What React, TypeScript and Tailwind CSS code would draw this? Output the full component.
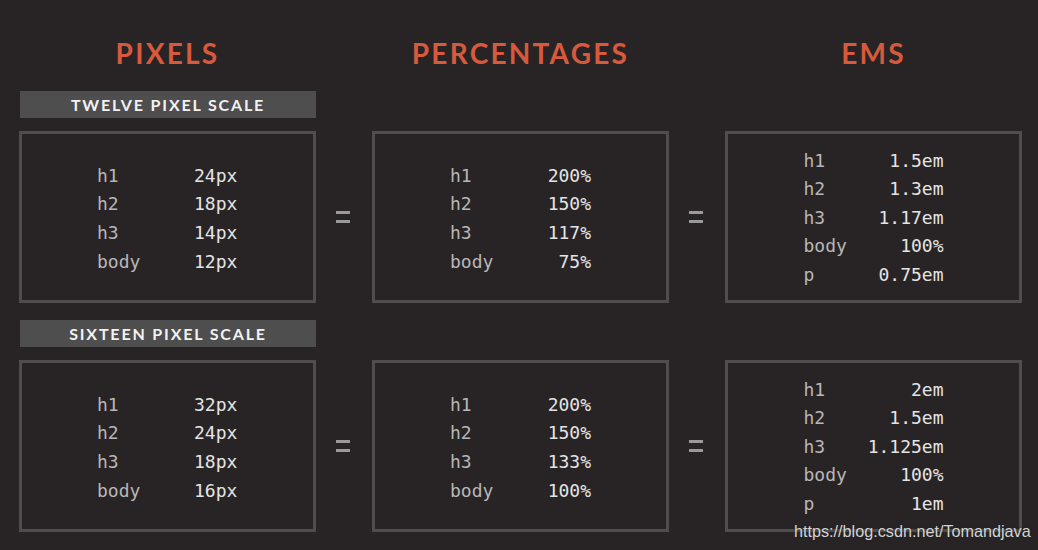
import React from "react";

type Row = [string, string];

const pxTwelve: Row[] = [["h1", "24px"], ["h2", "18px"], ["h3", "14px"], ["body", "12px"]];
const pctTwelve: Row[] = [["h1", "200%"], ["h2", "150%"], ["h3", "117%"], ["body", "75%"]];
const emTwelve: Row[] = [["h1", "1.5em"], ["h2", "1.3em"], ["h3", "1.17em"], ["body", "100%"], ["p", "0.75em"]];

const pxSixteen: Row[] = [["h1", "32px"], ["h2", "24px"], ["h3", "18px"], ["body", "16px"]];
const pctSixteen: Row[] = [["h1", "200%"], ["h2", "150%"], ["h3", "133%"], ["body", "100%"]];
const emSixteen: Row[] = [["h1", "2em"], ["h2", "1.5em"], ["h3", "1.125em"], ["body", "100%"], ["p", "1em"]];

const mono = "font-['DejaVu_Sans_Mono','Liberation_Mono',monospace] text-[18px] leading-[28.6px]";

const Box = ({ rows, kind }: { rows: Row[]; kind: "px" | "pct" | "em" }) => (
  <div className="w-[297px] h-[172px] border-[3px] border-[#4f4d4e] flex items-center justify-center">
    <div className={kind === "em" ? mono + " pt-[2px]" : mono + " pt-[4px]"}>
      {rows.map(([k, v]) => (
        <div key={k} className={kind === "em" ? "flex justify-between w-[140px]" : "flex w-[141px]"}>
          <span className={kind === "em" ? "text-[#b8b7b7]" : "w-[97px] text-[#b8b7b7]"}>{k}</span>
          <span className={kind === "pct" ? "w-[44px] text-right text-[#e4e4e4]" : "text-[#e4e4e4]"}>{v}</span>
        </div>
      ))}
    </div>
  </div>
);

const Equals = () => (
  <div className="w-[56px] flex flex-col items-center justify-center gap-[6px] pr-[2px]">
    <div className="w-[14px] h-[3px] bg-[#9b9a9a]" />
    <div className="w-[14px] h-[3px] bg-[#9b9a9a]" />
  </div>
);

const Label = ({ text }: { text: string }) => (
  <div className="w-[296px] ml-[1px] h-[27px] bg-[#4e4e4e] flex items-center justify-center text-[#f2f2f2] font-['Lato',sans-serif] font-bold text-[16px] tracking-[0.115em]">
    {text}
  </div>
);

const Heading = ({ text }: { text: string }) => (
  <div className="w-[297px] text-center text-[#d65a3b] font-['Lato',sans-serif] font-bold text-[28px] leading-[28px] tracking-[0.08em]">
    {text}
  </div>
);

export default function App() {
  return (
    <div className="relative w-[1038px] h-[550px] bg-[#282426] pl-[19px] overflow-hidden">
      <div className="flex pt-[39px] gap-[56px]">
        <Heading text="PIXELS" />
        <Heading text="PERCENTAGES" />
        <Heading text="EMS" />
      </div>

      <div className="mt-[24px]">
        <Label text="TWELVE PIXEL SCALE" />
      </div>
      <div className="flex mt-[13px]">
        <Box rows={pxTwelve} kind="px" />
        <Equals />
        <Box rows={pctTwelve} kind="pct" />
        <Equals />
        <Box rows={emTwelve} kind="em" />
      </div>

      <div className="mt-[17px]">
        <Label text="SIXTEEN PIXEL SCALE" />
      </div>
      <div className="flex mt-[13px]">
        <Box rows={pxSixteen} kind="px" />
        <Equals />
        <Box rows={pctSixteen} kind="pct" />
        <Equals />
        <Box rows={emSixteen} kind="em" />
      </div>

      <div className="absolute left-[794px] top-[522px] text-[16.2px] leading-[18px] font-['Liberation_Sans',Arial,sans-serif] text-[#d4d4d4] [text-shadow:0_0_2px_#222]">
        https://blog.csdn.net/Tomandjava
      </div>
    </div>
  );
}
